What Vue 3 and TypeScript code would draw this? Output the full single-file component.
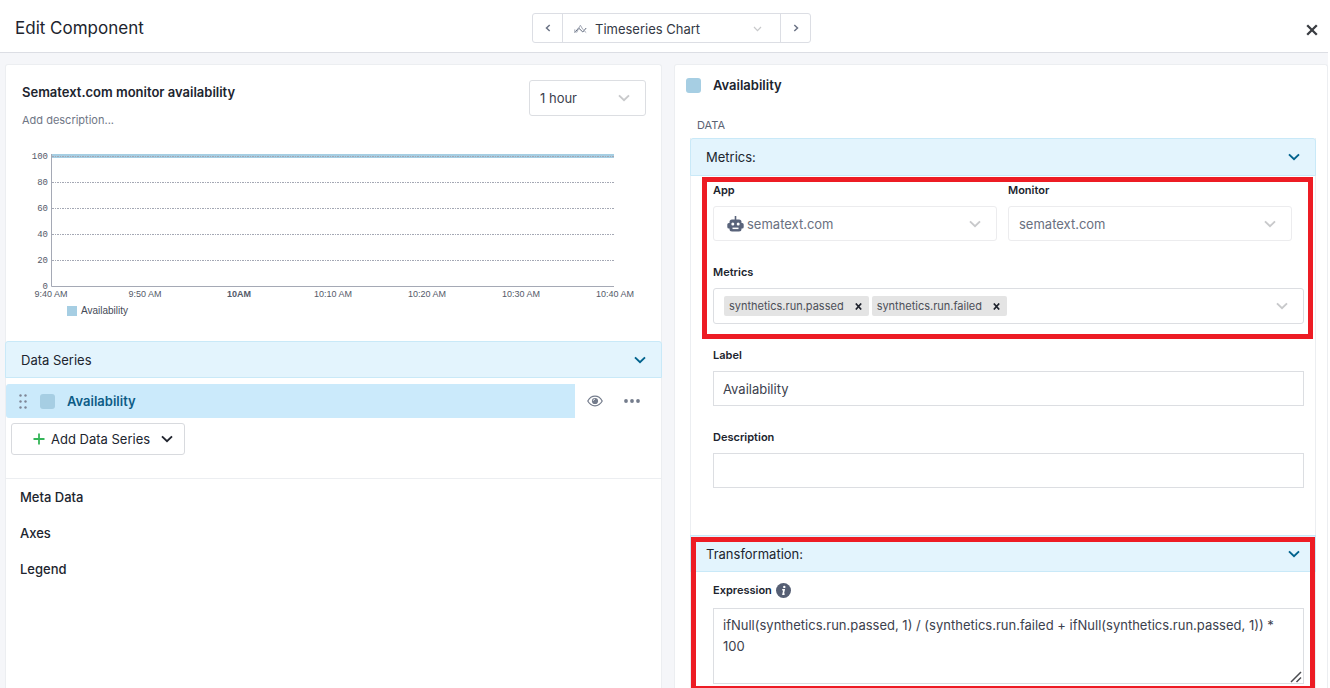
<script setup lang="ts">
import { ref } from 'vue'

const chartType = ref('Timeseries Chart')
const range = ref('1 hour')
const app = ref('sematext.com')
const monitor = ref('sematext.com')
const metrics = ref(['synthetics.run.passed', 'synthetics.run.failed'])
const label = ref('Availability')
const description = ref('')
const expression = ref(
  'ifNull(synthetics.run.passed, 1) / (synthetics.run.failed + ifNull(synthetics.run.passed, 1)) * 100'
)

const yTicks = [100, 80, 60, 40, 20, 0].map((value, i) => ({ value, y: 11 + i * 26 }))
const xTicks = ['9:40 AM', '9:50 AM', '10AM', '10:10 AM', '10:20 AM', '10:30 AM', '10:40 AM'].map(
  (text, i) => ({ text, x: 45 + i * 94, bold: text === '10AM' })
)
const sections = ['Meta Data', 'Axes', 'Legend']

function removeMetric(name: string) {
  metrics.value = metrics.value.filter((m) => m !== name)
}
</script>

<template>
  <div class="page">
    <header class="topbar">
      <h1>Edit Component</h1>
      <div class="switcher">
        <button class="step" type="button" aria-label="Previous chart type">
          <svg width="6" height="8" viewBox="0 0 6 8"><path d="M4.7 1 1.5 4l3.2 3" /></svg>
        </button>
        <div class="type">
          <svg class="series-icon" width="13" height="10" viewBox="0 0 13 10">
            <path d="M.8 8.6 4.6 4l4.2 4 3.4-4" />
            <path class="faint" d="M.8 5.4v3.200M2.600 8.600 6.400 1.200l2.400 4.200 3.400 3.200" />
          </svg>
          <select v-model="chartType" aria-label="Chart type">
            <option>Timeseries Chart</option>
          </select>
          <svg class="chev thin" width="9" height="6" viewBox="0 0 9 6"><path d="M1 1l3.5 3.6L8 1" /></svg>
        </div>
        <button class="step" type="button" aria-label="Next chart type">
          <svg width="6" height="8" viewBox="0 0 6 8"><path d="M1.3 1l3.2 3-3.2 3" /></svg>
        </button>
      </div>
      <button class="close" type="button" aria-label="Close">
        <svg width="12" height="12" viewBox="0 0 12 12"><path d="M1.2 1.2l9.6 9.6M10.8 1.2 1.2 10.8" /></svg>
      </button>
    </header>

    <main class="body">
      <section class="panel left">
        <div class="preview-head">
          <div>
            <h2>Sematext.com monitor availability</h2>
            <p>Add description...</p>
          </div>
          <div class="box range">
            <select v-model="range" aria-label="Time range">
              <option>1 hour</option>
            </select>
            <svg class="chev" width="12" height="8" viewBox="0 0 12 8"><path d="M1 1.4l5 4.8 5-4.8" /></svg>
          </div>
        </div>

        <svg class="chart" viewBox="0 0 655 177" role="img" aria-label="Availability over time">
          <rect class="line-area" x="45" y="9" width="563" height="4" />
          <g v-for="t in yTicks" :key="t.value">
            <line class="grid" x1="46" x2="608" :y1="t.y + 0.5" :y2="t.y + 0.5" />
            <text class="ytick" x="42" :y="t.y + 3">{{ t.value }}</text>
          </g>
          <path class="axis" d="M45.5 9v132.5H608" />
          <text v-for="t in xTicks" :key="t.text" :class="['xtick', { bold: t.bold }]" :x="t.x" y="152">{{ t.text }}</text>
          <rect class="swatch-fill" x="61" y="161" width="10" height="10" />
          <text class="legend" x="75" y="169">Availability</text>
        </svg>

        <div class="group">
          <button class="group-head" type="button">
            Data Series
            <svg class="chev dark" width="12" height="8" viewBox="0 0 12 8"><path d="M1 1.4l5 4.8 5-4.8" /></svg>
          </button>
          <div class="series-row">
            <button class="series" type="button">
              <svg class="grip" width="8" height="15" viewBox="0 0 8 15">
                <g v-for="y in [1.5, 7.5, 13.5]" :key="y">
                  <circle cx="1.5" :cy="y" r="1.2" /><circle cx="6.5" :cy="y" r="1.2" />
                </g>
              </svg>
              <span class="swatch"></span>
              Availability
            </button>
            <button class="icon-btn" type="button" aria-label="Toggle visibility">
              <svg width="16" height="12" viewBox="0 0 16 12">
                <path class="outline" d="M.8 6C2.4 3 5 1.2 8 1.2S13.600 3 15.200 6C13.600 9 11 10.800 8 10.800S2.400 9 .8 6z" />
                <circle class="fill" cx="8" cy="6" r="3.1" />
                <path class="glint" d="M6.3 5.8A1.700 1.700 0 0 1 8 4.200" />
              </svg>
            </button>
            <button class="icon-btn" type="button" aria-label="More actions">
              <svg width="16" height="4" viewBox="0 0 16 4">
                <circle class="fill" cx="2" cy="2" r="1.9" /><circle class="fill" cx="8" cy="2" r="1.9" /><circle class="fill" cx="14" cy="2" r="1.9" />
              </svg>
            </button>
          </div>
          <button class="add" type="button">
            <svg class="plus" width="12" height="12" viewBox="0 0 12 12"><path d="M6 .5v11M.5 6h11" /></svg>
            Add Data Series
            <svg class="chev black" width="12" height="8" viewBox="0 0 12 8"><path d="M1 1.4l5 4.8 5-4.8" /></svg>
          </button>
        </div>
        <nav class="sections">
          <button v-for="s in sections" :key="s" type="button">{{ s }}</button>
        </nav>
      </section>

      <section class="panel right">
        <h2 class="series-title"><span class="swatch"></span>Availability</h2>
        <h3>DATA</h3>
        <div class="form-group">
          <button class="form-head" type="button">
            Metrics:
            <svg class="chev dark" width="12" height="8" viewBox="0 0 12 8"><path d="M1 1.4l5 4.8 5-4.8" /></svg>
          </button>
          <div class="fields">
            <div class="pair">
              <div class="field">
                <label for="app">App</label>
                <div class="box pale">
                  <svg class="robot" width="17" height="16" viewBox="0 0 17 16">
                    <path d="M7.7 0h1.600v3.500H12a2.500 2.500 0 0 1 2.500 2.500v7A2.500 2.500 0 0 1 12 15.500H5A2.500 2.500 0 0 1 2.500 13V6A2.500 2.500 0 0 1 5 3.500h2.700z" />
                    <path d="M3 7H1.800Q.3 7 .3 8.500v2.500q0 1.500 1.500 1.500H3zM14 7h1.200q1.500 0 1.500 1.500v2.500q0 1.500-1.500 1.500H14z" />
                    <circle class="hole" cx="5.8" cy="8" r="1.5" /><circle class="hole" cx="11.2" cy="8" r="1.5" />
                    <path class="hole" d="M5.500 11.600h6v1.500h-6z" />
                  </svg>
                  <select id="app" v-model="app"><option>sematext.com</option></select>
                  <svg class="chev" width="12" height="8" viewBox="0 0 12 8"><path d="M1 1.4l5 4.8 5-4.8" /></svg>
                </div>
              </div>
              <div class="field">
                <label for="monitor">Monitor</label>
                <div class="box pale">
                  <select id="monitor" v-model="monitor"><option>sematext.com</option></select>
                  <svg class="chev" width="12" height="8" viewBox="0 0 12 8"><path d="M1 1.4l5 4.8 5-4.8" /></svg>
                </div>
              </div>
            </div>
            <div class="field">
              <label for="metrics">Metrics</label>
              <div class="box chips">
                <span v-for="m in metrics" :key="m" class="chip">
                  {{ m }}
                  <button type="button" :aria-label="'Remove ' + m" @click="removeMetric(m)">
                    <svg width="7" height="7" viewBox="0 0 7 7"><path d="M.8.5l5.4 6M6.2.5l-5.400 6" /></svg>
                  </button>
                </span>
                <input id="metrics" type="text" />
                <svg class="chev" width="12" height="8" viewBox="0 0 12 8"><path d="M1 1.4l5 4.8 5-4.8" /></svg>
              </div>
            </div>
            <div class="field">
              <label for="label">Label</label>
              <input id="label" v-model="label" class="text" type="text" />
            </div>
            <div class="field">
              <label for="description">Description</label>
              <input id="description" v-model="description" class="text" type="text" />
            </div>
          </div>
          <div class="highlight metrics-mark"></div>
        </div>

        <div class="form-group second">
          <button class="form-head" type="button">
            Transformation:
            <svg class="chev dark" width="12" height="8" viewBox="0 0 12 8"><path d="M1 1.4l5 4.8 5-4.8" /></svg>
          </button>
          <div class="fields expression">
            <div class="label-row">
              <label for="expression">Expression</label>
              <svg width="15" height="15" viewBox="0 0 15 15">
                <circle class="info" cx="7.5" cy="7.5" r="7.5" />
                <circle class="mark" cx="8.3" cy="3.9" r="1.2" />
                <path class="stem" d="M6.2 6.700h1.900l-1 4.400h1.500" />
              </svg>
            </div>
            <div class="area">
              <textarea id="expression" v-model="expression" rows="3"></textarea>
              <svg class="resize" width="12" height="12" viewBox="0 0 12 12"><path d="M1 11 11 1M6.5 11 11 6.5" /></svg>
            </div>
          </div>
          <div class="highlight transform-mark"></div>
        </div>
      </section>
    </main>
  </div>
</template>

<style>
body {
  margin: 0;
  background: #fff;
}
</style>

<style scoped>
.page,
.page * {
  box-sizing: border-box;
}
.page {
  display: flex;
  flex-direction: column;
  height: 100vh;
  padding-right: 2px;
  overflow: hidden;
  font: 400 13px/20px Inter, "Liberation Sans", sans-serif;
  color: #20242e;
}
h1,
h2,
h3,
p {
  margin: 0;
}
button,
input,
select,
textarea {
  margin: 0;
  padding: 0;
  border: 0;
  background: none;
  font: inherit;
  color: inherit;
  outline: none;
}
select {
  appearance: none;
  flex: 1;
  min-width: 0;
}
svg {
  display: block;
  flex: none;
  fill: none;
}
.topbar {
  display: grid;
  grid-template-columns: 1fr auto 1fr;
  align-items: center;
  flex: none;
  height: 53px;
  padding: 4px 10px 0 15px;
  border-bottom: 1px solid #dcdee4;
}
h1 {
  font-size: 17px;
  font-weight: 400;
  line-height: 24px;
}
.switcher {
  display: flex;
  width: 279px;
  height: 30px;
  margin-left: 10px;
  border: 1px solid #dcdee4;
  border-radius: 3px;
}
.step {
  display: flex;
  align-items: center;
  justify-content: center;
  width: 29px;
}
.step path {
  stroke: #6b7385;
  stroke-width: 1.5;
}
.type {
  display: flex;
  align-items: center;
  flex: 1;
  gap: 8px;
  padding: 2px 18px 0 11px;
  border: solid #dcdee4;
  border-width: 0 1px;
  color: #343945;
}
.series-icon path {
  stroke: #626b7d;
  stroke-width: 1;
}
.series-icon .faint {
  stroke: #a2a8b5;
}
.chev path {
  stroke: #c8c9cb;
  stroke-width: 1.9;
}
.chev.thin path {
  stroke-width: 1.2;
}
.chev.dark path {
  stroke: #00628d;
}
.chev.black path {
  stroke: #20242e;
}
.close {
  justify-self: end;
  padding-top: 4px;
}
.close path {
  stroke: #3a3d42;
  stroke-width: 2.3;
}
.body {
  display: grid;
  grid-template-columns: 657fr 654fr;
  gap: 12px;
  flex: 1;
  min-height: 0;
  padding: 11px 0 0 5px;
  background: #f5f6f9;
}
.panel {
  min-width: 0;
  border: 1px solid #eceef1;
  border-bottom: 0;
  border-radius: 3px 3px 0 0;
  background: #fff;
}
.preview-head {
  display: flex;
  justify-content: space-between;
  align-items: flex-start;
  padding: 15px 15px 0 16px;
}
h2 {
  font-size: 13px;
  font-weight: 600;
  line-height: 24px;
}
.preview-head p {
  padding-top: 6px;
  font-size: 11px;
  color: #6f7686;
}
.box {
  display: flex;
  align-items: center;
  height: 35px;
  padding: 0 15px 0 10px;
  border: 1px solid #dcdee2;
  border-radius: 3px;
}
.box.pale {
  border-color: #ececee;
  color: #6a7080;
}
.box.range {
  width: 117px;
  height: 36px;
  color: #3c414d;
}
.chart {
  width: 100%;
  height: auto;
  margin-top: 15px;
}
.line-area,
.swatch-fill {
  fill: #a6cee3;
}
.grid {
  stroke: #a4a8b4;
  stroke-width: 1;
  stroke-dasharray: 2 1 1 1;
}
.axis {
  stroke: #a5a9b5;
}
.ytick {
  fill: #545a69;
  font: 9px "Liberation Mono", monospace;
  text-anchor: end;
}
.xtick {
  fill: #545a69;
  font: 9px "Liberation Sans", sans-serif;
  text-anchor: middle;
}
.xtick.bold {
  font-weight: 700;
}
.legend {
  fill: #454a57;
  font: 10px "Liberation Sans", sans-serif;
}
.group {
  margin: 19px -1px 0;
  padding-bottom: 23px;
  border-bottom: 1px solid #eceef1;
}
.group-head,
.form-head {
  display: flex;
  align-items: center;
  justify-content: space-between;
  width: 100%;
  height: 37px;
  padding: 0 15px;
  border: 1px solid #c9e9f8;
  border-radius: 3px 3px 0 0;
  background: #e3f4fd;
}
.series-row {
  display: flex;
  align-items: center;
  margin-top: 6px;
  padding: 0 22px 0 1px;
  gap: 21px;
}
.series {
  display: flex;
  align-items: center;
  flex: 1;
  height: 34px;
  margin-right: -9px;
  padding-left: 13px;
  border-radius: 3px 0 0 3px;
  background: #cbeafb;
  color: #0d5c86;
  font-weight: 600;
}
.grip {
  margin-right: 13px;
  fill: #7e8696;
}
.swatch {
  width: 15px;
  height: 15px;
  margin-right: 12px;
  border-radius: 3px;
  background: #a6cee3;
}
.icon-btn .outline {
  stroke: #747c8c;
  stroke-width: 1.2;
}
.icon-btn .fill {
  fill: #747c8c;
}
.icon-btn .glint {
  stroke: #fff;
  stroke-width: 0.8;
}
.add {
  display: flex;
  align-items: center;
  height: 32px;
  margin: 5px 0 0 6px;
  padding: 0 11px 0 21px;
  border: 1px solid #d8dade;
  border-radius: 3px;
}
.plus {
  margin-right: 6px;
}
.plus path {
  stroke: #35b558;
  stroke-width: 1.8;
}
.add .chev {
  margin-left: 11px;
}
.sections {
  display: flex;
  flex-direction: column;
  align-items: flex-start;
  padding-left: 14px;
}
.sections button {
  height: 36px;
  font-weight: 500;
}
.right {
  padding: 8px 11px 0 15px;
}
.series-title {
  display: flex;
  align-items: center;
  margin-left: -4px;
}
h3 {
  padding: 18px 0 3px 7px;
  font-size: 11px;
  font-weight: 400;
  color: #5c6373;
}
.form-group {
  position: relative;
  display: flex;
  flex-direction: column;
  border: solid #eceef1;
  border-width: 0 1px;
}
.form-head {
  width: auto;
  height: 38px;
  margin: 0 -1px;
}
.fields {
  display: flex;
  flex-direction: column;
  gap: 21px;
  padding: 4px 11px 47px 22px;
}
.pair {
  display: grid;
  grid-template-columns: 1fr 1fr;
  gap: 11px;
  padding-right: 12px;
}
.field {
  display: flex;
  flex-direction: column;
  gap: 6px;
}
label {
  font-size: 11px;
  font-weight: 600;
}
.robot {
  margin: 0 3px 0 3px;
  fill: #59637a;
}
.robot .hole {
  fill: #fff;
}
.box.chips {
  gap: 3px;
  height: 36px;
}
.chip {
  display: flex;
  align-items: center;
  gap: 11px;
  height: 20px;
  padding: 0 7px 0 5px;
  border-radius: 2px;
  background: #e4e4e4;
  color: #4c4f58;
  font-size: 11px;
}
.chip path {
  stroke: #20242e;
  stroke-width: 1.7;
}
.chips input {
  flex: 1;
  min-width: 0;
}
.text {
  height: 35px;
  padding: 0 9px;
  border: 1px solid #dcdee2;
  color: #3c414d;
}
.second .form-head {
  height: 37px;
  border-radius: 0;
}
.expression {
  gap: 8px;
  padding-top: 8px;
}
.label-row {
  display: flex;
  align-items: center;
  gap: 4px;
}
.info {
  fill: #565f74;
}
.mark {
  fill: #fff;
}
.stem {
  stroke: #fff;
  stroke-width: 1.6;
}
.area {
  position: relative;
  display: flex;
}
textarea {
  flex: 1;
  height: 76px;
  padding: 6px 9px;
  border: 1px solid #dcdee2;
  line-height: 21px;
  resize: none;
  overflow: hidden;
  color: #3c414d;
}
.resize {
  position: absolute;
  right: 2px;
  bottom: 1px;
}
.resize path {
  stroke: #4a4c50;
  stroke-width: 1.5;
}
.highlight {
  position: absolute;
  border: 5px solid #ed1c24;
  pointer-events: none;
}
.metrics-mark {
  top: 39px;
  left: 11px;
  right: 2px;
  height: 162px;
}
.transform-mark {
  top: 2px;
  left: 0;
  right: 0;
  height: 154px;
}
</style>
